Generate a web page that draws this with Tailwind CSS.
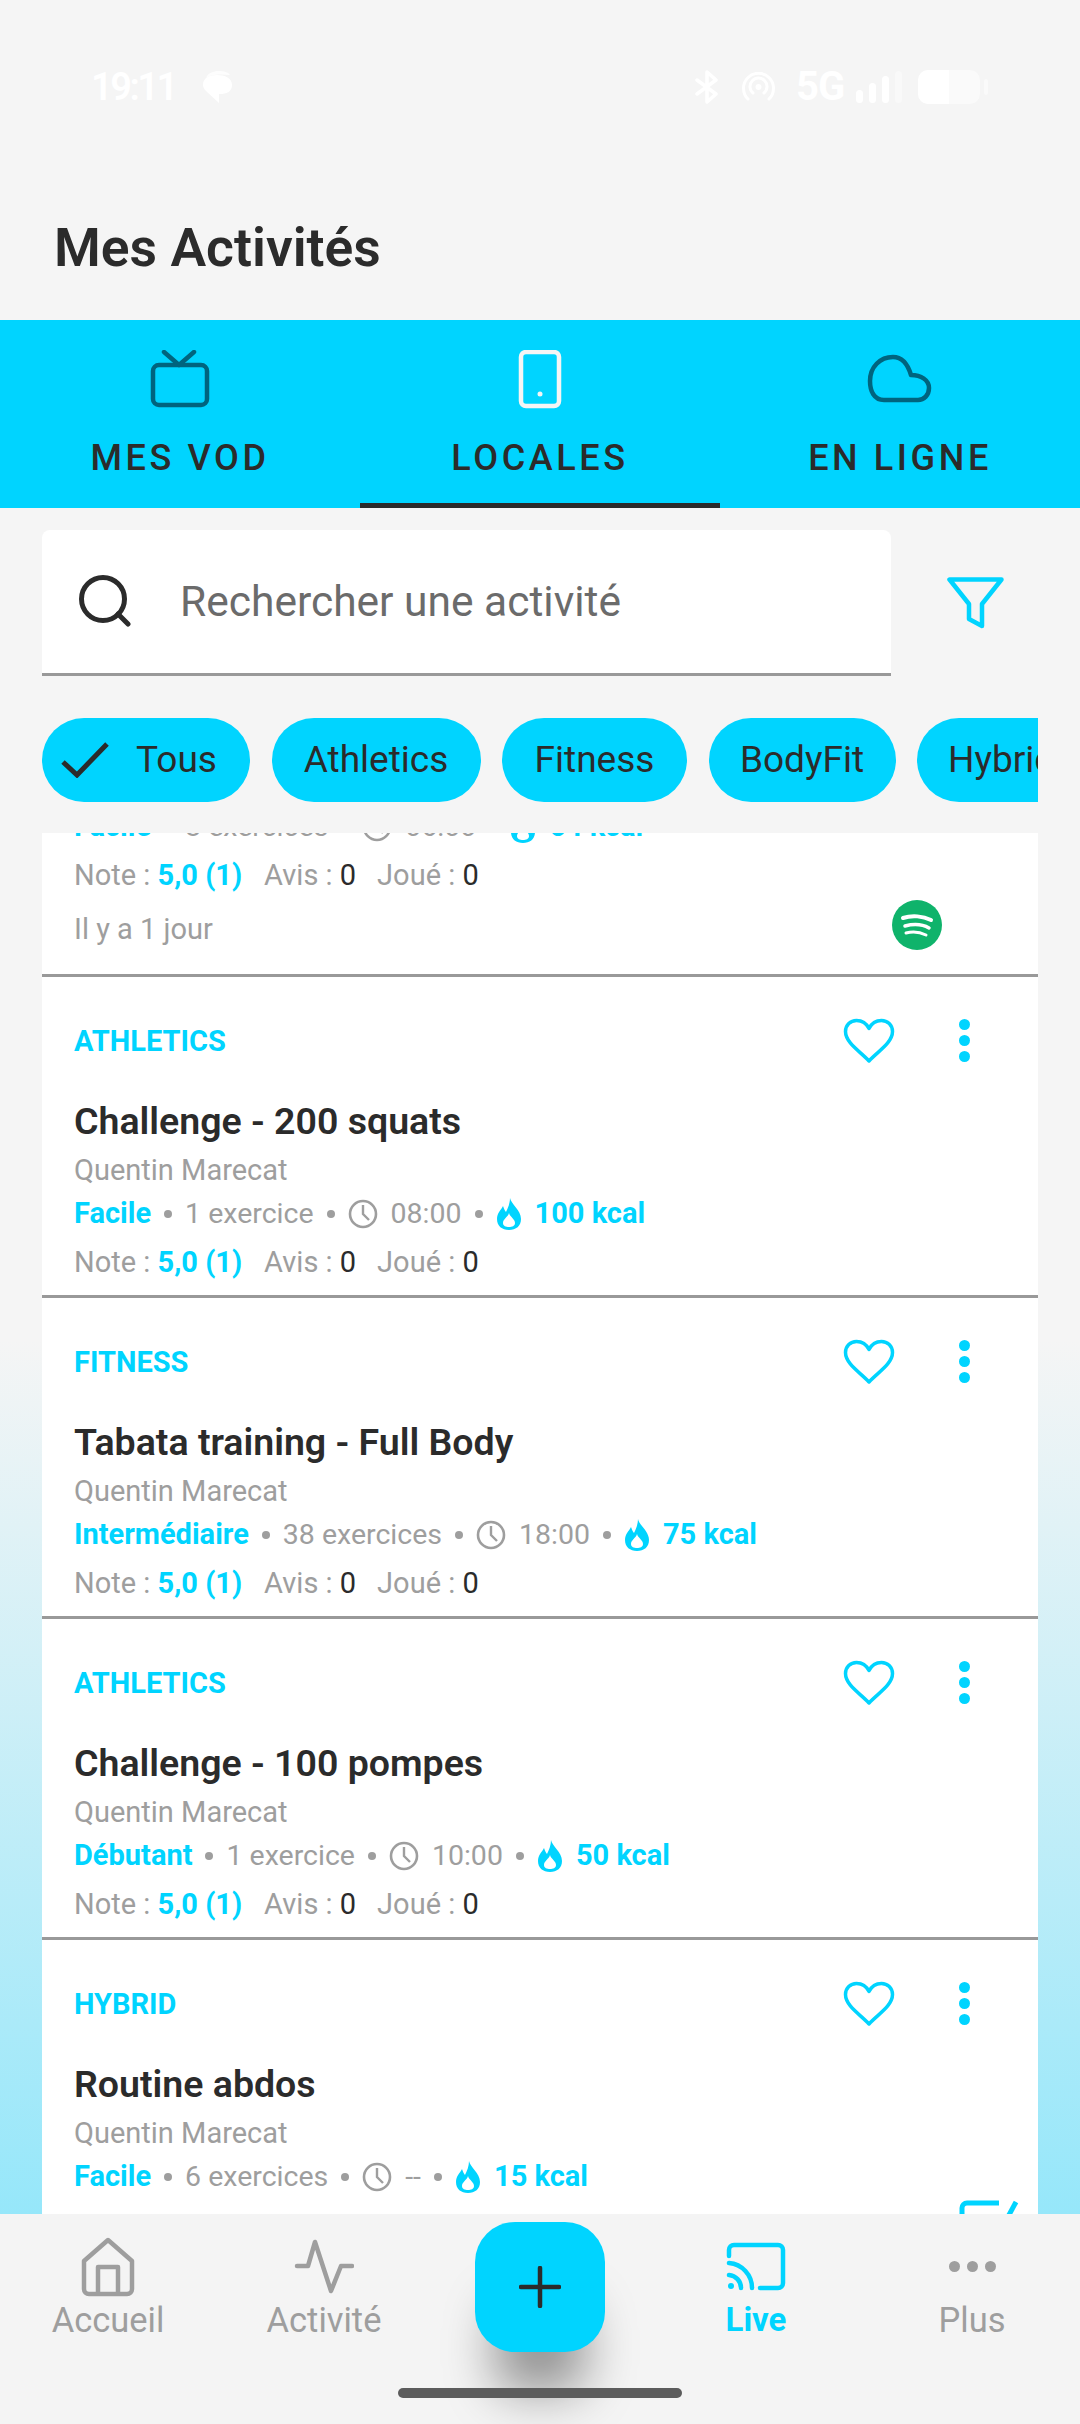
<!DOCTYPE html>
<html lang="en">
<head>
    <meta charset="UTF-8">
    <meta name="viewport" content="width=device-width, initial-scale=1.0">
    <title>Mes Activités</title>
    <script src="https://cdn.jsdelivr.net/npm/@tailwindcss/browser@4"></script>
</head>
<body class="bg-[#f5f5f5]">
    <!-- shared icons -->
    <svg class="hidden">
        <symbol id="heart" viewBox="0 0 52 46">
            <path d="M26 43 C18 34 2.5 25 2.5 13.5 C2.5 7 7.5 2.5 13.5 2.5 C19 2.5 23.5 5.5 26 10.5 C28.5 5.5 33 2.5 38.5 2.5 C44.5 2.5 49.5 7 49.5 13.5 C49.5 25 34 34 26 43 Z" fill="none" stroke="#00d4ff" stroke-width="3.5" stroke-linejoin="round"/>
        </symbol>
        <symbol id="clock" viewBox="0 0 30 30">
            <circle cx="15" cy="15" r="13" fill="none" stroke="#9e9e9e" stroke-width="2.6"/>
            <path d="M15 6v9l6 6" fill="none" stroke="#9e9e9e" stroke-width="2.4"/>
        </symbol>
        <symbol id="flame" viewBox="0 0 26 32">
            <path d="M14 0 C15 6 25 12 25 21 C25 28 20 32 13 32 C6 32 1 28 1 21 C1 15 5 12 7 8 C8 11 9 13 10 14 C12 10 14 5 14 0 Z M13 15 C12 19 7 21 7 25 C7 28 10 29 13 29 C16 29 19 28 19 25 C19 21 14 19 13 15 Z" fill="#00d4ff" fill-rule="evenodd"/>
        </symbol>
    </svg>

    <div class="relative w-[1080px] h-[2424px] flex flex-col overflow-hidden font-['Roboto',sans-serif] bg-[linear-gradient(to_bottom,#f5f5f5_0,#f5f5f5_1340px,#96e7fa_2214px)]">
        <!-- status bar and title -->
        <div class="h-[320px] shrink-0 bg-[#f5f5f5]">
            <div class="h-[200px] flex items-start justify-between pt-[68px] pl-[91px] pr-[92px] text-white">
                <div class="flex items-center gap-[25px] h-[38px]">
                    <span class="text-[38px] leading-[36px] font-semibold tracking-[-2.5px]">19:11</span>
                    <svg width="32" height="34" viewBox="0 0 32 34" fill="#fff"><path d="M5 8C7 3 12 1 18 1c5 0 9 1 11 4-8-1-20-1-24 3z" opacity="0.8"/><path d="M16 5c8 0 15 3 15 10s-6 9-12 9h-1v9L5 21c-2-2-3-4-3-6C2 8 8 5 16 5z"/></svg>
                </div>
                <div class="flex items-center h-[38px]">
                    <svg width="28" height="34" viewBox="0 0 28 34" fill="none" stroke="#fff" stroke-width="3.5" stroke-linecap="round" stroke-linejoin="round"><path d="M4 10l19 14-9 8V2l9 8L4 24"/></svg>
                    <svg class="ml-[21px]" width="33" height="30" viewBox="0 0 33 30" fill="none" stroke="#fff" stroke-width="3" stroke-linecap="round"><path d="M6 27a15 15 0 1 1 21 0"/><path d="M11 21a8.5 8.5 0 1 1 11 0"/><circle cx="16.500" cy="15" r="3" fill="#fff" stroke="none"/></svg>
                    <span class="ml-[21px] w-[46px] text-[40px] leading-[36px] font-bold tracking-[-1px]">5G</span>
                    <div class="ml-[14px] flex items-end gap-[6px] h-[32px]">
                        <div class="w-[7px] h-[13px] rounded-full bg-white"></div>
                        <div class="w-[7px] h-[20px] rounded-full bg-white"></div>
                        <div class="w-[7px] h-[27px] rounded-full bg-white"></div>
                        <div class="w-[7px] h-[32px] rounded-full bg-white/40"></div>
                    </div>
                    <div class="ml-[16px] flex items-center gap-[4px]">
                        <div class="w-[62px] h-[34px] rounded-[10px] bg-white/50 overflow-hidden"><div class="w-[31px] h-full bg-white"></div></div>
                        <div class="w-[4px] h-[16px] rounded-full bg-white/50"></div>
                    </div>
                </div>
            </div>
            <h1 class="mt-[20px] pl-[54px] text-[53.500px] leading-[56px] font-semibold text-[#2b2b2b]">Mes Activités</h1>
        </div>

        <!-- tabs -->
        <div class="h-[188px] shrink-0 grid grid-cols-3 bg-[#00d4ff]">
            <div class="flex flex-col items-center pt-[30px]">
                <svg width="60" height="60" viewBox="0 0 60 60" fill="none" stroke="#00647e" stroke-width="4.500" stroke-linecap="round" stroke-linejoin="round"><rect x="3" y="15" width="54" height="40" rx="6"/><path d="M14 2l15 13L44 2"/></svg>
                <span class="mt-[28px] text-[36px] leading-[40px] tracking-[3.600px] font-medium text-[#2b2b2b]">MES VOD</span>
            </div>
            <div class="relative flex flex-col items-center pt-[30px]">
                <svg width="60" height="60" viewBox="0 0 60 60" fill="none" stroke="#f5f5f5" stroke-width="4.500" stroke-linejoin="round"><rect x="11" y="2" width="38" height="54" rx="5"/><circle cx="30" cy="44" r="2.500" fill="#f5f5f5" stroke="none"/></svg>
                <span class="mt-[28px] text-[36px] leading-[40px] tracking-[3.600px] font-medium text-[#2b2b2b]">LOCALES</span>
                <div class="absolute left-0 right-0 bottom-0 h-[5px] bg-[#2b2b2b]"></div>
            </div>
            <div class="flex flex-col items-center pt-[30px]">
                <svg width="68" height="60" viewBox="0 0 68 60" fill="none" stroke="#00647e" stroke-width="4.500" stroke-linejoin="round"><path d="M18 50 C8 50 4 41 4 31 C4 17 14 7 27 7 C37 7 42 15 45 25 C55 25 63 30 63 38 C63 45 58 50 52 50 Z"/></svg>
                <span class="mt-[28px] text-[36px] leading-[40px] tracking-[3.600px] font-medium text-[#2b2b2b]">EN LIGNE</span>
            </div>
        </div>

        <!-- search -->
        <div class="mt-[22px] ml-[42px] h-[146px] shrink-0 flex items-center">
            <div class="w-[849px] h-full flex items-center bg-white rounded-t-[8px] border-b-[3px] border-[#999999] pl-[37px] pb-[2px]">
                <svg width="52" height="52" viewBox="0 0 52 52" fill="none" stroke="#2b2b2b" stroke-width="5" stroke-linecap="round"><circle cx="24" cy="24" r="21.500"/><path d="M39 39l10 10"/></svg>
                <span class="ml-[49px] pt-[2px] text-[42.500px] text-[#6b6b6b]">Rechercher une activité</span>
            </div>
            <svg class="ml-[56px]" width="57" height="52" viewBox="0 0 57 52" fill="none" stroke="#00d4ff" stroke-width="4.500" stroke-linejoin="round"><path d="M2.500 2.500H54.500L35 27V49L22 42V27Z"/></svg>
        </div>

        <!-- filter chips -->
        <div class="mt-[42px] mx-[42px] h-[84px] shrink-0 flex gap-[21.500px] overflow-hidden text-[37px] text-[#2b2b2b]">
            <div class="h-full w-[208px] shrink-0 flex items-center rounded-full bg-[#00d4ff] pl-[19px]">
                <svg width="48" height="36" viewBox="0 0 48 36" fill="none" stroke="#2b2b2b" stroke-width="5"><path d="M2 20l14 13L46 2"/></svg>
                <span class="ml-[27px]">Tous</span>
            </div>
            <div class="h-full w-[209px] shrink-0 flex items-center justify-center rounded-full bg-[#00d4ff]">Athletics</div>
            <div class="h-full w-[185px] shrink-0 flex items-center justify-center rounded-full bg-[#00d4ff]">Fitness</div>
            <div class="h-full w-[187px] shrink-0 flex items-center justify-center rounded-full bg-[#00d4ff]">BodyFit</div>
            <div class="h-full w-[200px] shrink-0 flex items-center rounded-full bg-[#00d4ff] pl-[31px]">Hybrid</div>
        </div>

        <!-- activity list -->
        <div class="mt-[31px] mx-[42px] flex-1 min-h-0 overflow-hidden">
            <div class="relative bg-white border-b-[3px] border-[#999999] h-[144px]">
                <div class="absolute left-[32px] top-[-29px] h-[46px] flex items-center gap-[13px] text-[28.500px] text-[#9e9e9e]">
                    <span class="text-[29px] font-bold text-[#00d4ff]">Facile</span><i class="w-[8px] h-[8px] rounded-full bg-[#9e9e9e]"></i><span>8 exercices</span><i class="w-[8px] h-[8px] rounded-full bg-[#9e9e9e]"></i><svg width="30" height="30"><use href="#clock"/></svg><span>06:00</span><i class="w-[8px] h-[8px] rounded-full bg-[#9e9e9e]"></i><svg width="26" height="32"><use href="#flame"/></svg><span class="text-[29px] font-bold text-[#00d4ff]">64 kcal</span>
                </div>
                <div class="absolute left-[32px] top-[20px] h-[46px] flex items-center text-[29px] text-[#9e9e9e]">Note :&nbsp;<b class="font-bold text-[#00d4ff]">5,0 (1)</b><span class="ml-[22px]">Avis :&nbsp;</span><span class="text-[#2b2b2b]">0</span><span class="ml-[21px]">Joué :&nbsp;</span><span class="text-[#2b2b2b]">0</span></div>
                <div class="absolute left-[32px] top-[77px] h-[40px] flex items-center text-[29px] text-[#9e9e9e]">Il y a 1 jour</div>
                <svg class="absolute left-[850px] top-[67px]" width="50" height="50" viewBox="0 0 50 50"><circle cx="25" cy="25" r="25" fill="#0fb36b"/><g fill="none" stroke="#fff" stroke-linecap="round"><path d="M11 18c9-3 20-2 28 2" stroke-width="4"/><path d="M13 26c8-2 17-2 24 2" stroke-width="3.500"/><path d="M14 33c7-2 14-1 20 2" stroke-width="3"/></g></svg>
            </div>

            <div class="bg-white pl-[32px] border-b-[3px] border-[#999999]">
                <div class="h-[129px] flex items-center justify-between pr-[68px]">
                    <span class="text-[29px] font-bold text-[#00d4ff]">ATHLETICS</span>
                    <div class="flex items-center gap-[64px] -mt-[2px]"><svg width="52" height="46"><use href="#heart"/></svg><div class="flex flex-col gap-[5px]"><i class="w-[11px] h-[11px] rounded-full bg-[#00d4ff]"></i><i class="w-[11px] h-[11px] rounded-full bg-[#00d4ff]"></i><i class="w-[11px] h-[11px] rounded-full bg-[#00d4ff]"></i></div></div>
                </div>
                <div class="h-[30px] flex items-center text-[37.500px] font-semibold text-[#2b2b2b]">Challenge - 200 squats</div>
                <div class="mt-[15px] h-[40px] flex items-center text-[29px] text-[#9e9e9e]">Quentin Marecat</div>
                <div class="h-[46px] flex items-center gap-[13px] text-[28.500px] text-[#9e9e9e]"><span class="text-[29px] font-bold text-[#00d4ff]">Facile</span><i class="w-[8px] h-[8px] rounded-full bg-[#9e9e9e]"></i><span>1 exercice</span><i class="w-[8px] h-[8px] rounded-full bg-[#9e9e9e]"></i><svg width="30" height="30"><use href="#clock"/></svg><span>08:00</span><i class="w-[8px] h-[8px] rounded-full bg-[#9e9e9e]"></i><svg width="26" height="32"><use href="#flame"/></svg><span class="text-[29px] font-bold text-[#00d4ff]">100 kcal</span></div>
                <div class="mt-[3px] mb-[9px] h-[46px] flex items-center text-[29px] text-[#9e9e9e]">Note :&nbsp;<b class="font-bold text-[#00d4ff]">5,0 (1)</b><span class="ml-[22px]">Avis :&nbsp;</span><span class="text-[#2b2b2b]">0</span><span class="ml-[21px]">Joué :&nbsp;</span><span class="text-[#2b2b2b]">0</span></div>
            </div>

            <div class="bg-white pl-[32px] border-b-[3px] border-[#999999]">
                <div class="h-[129px] flex items-center justify-between pr-[68px]">
                    <span class="text-[29px] font-bold text-[#00d4ff]">FITNESS</span>
                    <div class="flex items-center gap-[64px] -mt-[2px]"><svg width="52" height="46"><use href="#heart"/></svg><div class="flex flex-col gap-[5px]"><i class="w-[11px] h-[11px] rounded-full bg-[#00d4ff]"></i><i class="w-[11px] h-[11px] rounded-full bg-[#00d4ff]"></i><i class="w-[11px] h-[11px] rounded-full bg-[#00d4ff]"></i></div></div>
                </div>
                <div class="h-[30px] flex items-center text-[37.500px] font-semibold text-[#2b2b2b]">Tabata training - Full Body</div>
                <div class="mt-[15px] h-[40px] flex items-center text-[29px] text-[#9e9e9e]">Quentin Marecat</div>
                <div class="h-[46px] flex items-center gap-[13px] text-[28.500px] text-[#9e9e9e]"><span class="text-[29px] font-bold text-[#00d4ff]">Intermédiaire</span><i class="w-[8px] h-[8px] rounded-full bg-[#9e9e9e]"></i><span>38 exercices</span><i class="w-[8px] h-[8px] rounded-full bg-[#9e9e9e]"></i><svg width="30" height="30"><use href="#clock"/></svg><span>18:00</span><i class="w-[8px] h-[8px] rounded-full bg-[#9e9e9e]"></i><svg width="26" height="32"><use href="#flame"/></svg><span class="text-[29px] font-bold text-[#00d4ff]">75 kcal</span></div>
                <div class="mt-[3px] mb-[9px] h-[46px] flex items-center text-[29px] text-[#9e9e9e]">Note :&nbsp;<b class="font-bold text-[#00d4ff]">5,0 (1)</b><span class="ml-[22px]">Avis :&nbsp;</span><span class="text-[#2b2b2b]">0</span><span class="ml-[21px]">Joué :&nbsp;</span><span class="text-[#2b2b2b]">0</span></div>
            </div>

            <div class="bg-white pl-[32px] border-b-[3px] border-[#999999]">
                <div class="h-[129px] flex items-center justify-between pr-[68px]">
                    <span class="text-[29px] font-bold text-[#00d4ff]">ATHLETICS</span>
                    <div class="flex items-center gap-[64px] -mt-[2px]"><svg width="52" height="46"><use href="#heart"/></svg><div class="flex flex-col gap-[5px]"><i class="w-[11px] h-[11px] rounded-full bg-[#00d4ff]"></i><i class="w-[11px] h-[11px] rounded-full bg-[#00d4ff]"></i><i class="w-[11px] h-[11px] rounded-full bg-[#00d4ff]"></i></div></div>
                </div>
                <div class="h-[30px] flex items-center text-[37.500px] font-semibold text-[#2b2b2b]">Challenge - 100 pompes</div>
                <div class="mt-[15px] h-[40px] flex items-center text-[29px] text-[#9e9e9e]">Quentin Marecat</div>
                <div class="h-[46px] flex items-center gap-[13px] text-[28.500px] text-[#9e9e9e]"><span class="text-[29px] font-bold text-[#00d4ff]">Débutant</span><i class="w-[8px] h-[8px] rounded-full bg-[#9e9e9e]"></i><span>1 exercice</span><i class="w-[8px] h-[8px] rounded-full bg-[#9e9e9e]"></i><svg width="30" height="30"><use href="#clock"/></svg><span>10:00</span><i class="w-[8px] h-[8px] rounded-full bg-[#9e9e9e]"></i><svg width="26" height="32"><use href="#flame"/></svg><span class="text-[29px] font-bold text-[#00d4ff]">50 kcal</span></div>
                <div class="mt-[3px] mb-[9px] h-[46px] flex items-center text-[29px] text-[#9e9e9e]">Note :&nbsp;<b class="font-bold text-[#00d4ff]">5,0 (1)</b><span class="ml-[22px]">Avis :&nbsp;</span><span class="text-[#2b2b2b]">0</span><span class="ml-[21px]">Joué :&nbsp;</span><span class="text-[#2b2b2b]">0</span></div>
            </div>

            <div class="relative bg-white pl-[32px] h-[400px]">
                <div class="h-[129px] flex items-center justify-between pr-[68px]">
                    <span class="text-[29px] font-bold text-[#00d4ff]">HYBRID</span>
                    <div class="flex items-center gap-[64px] -mt-[2px]"><svg width="52" height="46"><use href="#heart"/></svg><div class="flex flex-col gap-[5px]"><i class="w-[11px] h-[11px] rounded-full bg-[#00d4ff]"></i><i class="w-[11px] h-[11px] rounded-full bg-[#00d4ff]"></i><i class="w-[11px] h-[11px] rounded-full bg-[#00d4ff]"></i></div></div>
                </div>
                <div class="h-[30px] flex items-center text-[37.500px] font-semibold text-[#2b2b2b]">Routine abdos</div>
                <div class="mt-[15px] h-[40px] flex items-center text-[29px] text-[#9e9e9e]">Quentin Marecat</div>
                <div class="h-[46px] flex items-center gap-[13px] text-[28.500px] text-[#9e9e9e]"><span class="text-[29px] font-bold text-[#00d4ff]">Facile</span><i class="w-[8px] h-[8px] rounded-full bg-[#9e9e9e]"></i><span>6 exercices</span><i class="w-[8px] h-[8px] rounded-full bg-[#9e9e9e]"></i><svg width="30" height="30"><use href="#clock"/></svg><span>--</span><i class="w-[8px] h-[8px] rounded-full bg-[#9e9e9e]"></i><svg width="26" height="32"><use href="#flame"/></svg><span class="text-[29px] font-bold text-[#00d4ff]">15 kcal</span></div>
                <svg class="absolute left-[917px] top-[260px]" width="60" height="60" viewBox="0 0 60 60" fill="none" stroke="#00d4ff" stroke-width="5"><path d="M40 3H8a5 5 0 0 0-5 5v45h45V30"/><path d="M57 2 44 26"/></svg>
            </div>
        </div>

        <!-- bottom navigation -->
        <div class="relative h-[210px] shrink-0 grid grid-cols-5 bg-[#f4f4f4] text-[34.500px] leading-[38px] text-[#9e9e9e]">
            <div class="flex flex-col items-center pt-[22px]">
                <svg width="60" height="62" viewBox="0 0 60 62" fill="none" stroke="#9e9e9e" stroke-width="4.500" stroke-linejoin="round"><path d="M30 4 54 25V53a5 5 0 0 1-5 5H11a5 5 0 0 1-5-5V25Z"/><path d="M20 58V31H40V58"/></svg>
                <span class="mt-[3px]">Accueil</span>
            </div>
            <div class="flex flex-col items-center pt-[22px]">
                <svg width="60" height="62" viewBox="0 0 60 62" fill="none" stroke="#9e9e9e" stroke-width="4.500" stroke-linecap="round" stroke-linejoin="round"><path d="M3 30H14L21 6 37 55 47 30H58"/></svg>
                <span class="mt-[3px]">Activité</span>
            </div>
            <div class="flex justify-center pt-[8px]">
                <div class="w-[130px] h-[130px] rounded-[40px] bg-[#00d4ff] flex items-center justify-center shadow-[0_60px_50px_-20px_rgba(0,0,0,0.4)]">
                    <svg width="42" height="42" viewBox="0 0 42 42" stroke="#2b2b2b" stroke-width="4.500" stroke-linecap="round"><path d="M21 2v38M2 21h38"/></svg>
                </div>
            </div>
            <div class="flex flex-col items-center pt-[22px]">
                <svg width="60" height="62" viewBox="0 0 60 62" fill="none" stroke="#00d4ff" stroke-width="4.500" stroke-linecap="round" stroke-linejoin="round"><path d="M3 20V14a5 5 0 0 1 5-5h44a5 5 0 0 1 5 5v33a5 5 0 0 1-5 5H34"/><path d="M3 27a25 25 0 0 1 23 25"/><path d="M3 39a13 13 0 0 1 12 13"/><circle cx="5" cy="50" r="3" fill="#00d4ff" stroke="none"/></svg>
                <span class="mt-[3px] text-[33px] font-bold text-[#00d4ff]">Live</span>
            </div>
            <div class="flex flex-col items-center pt-[22px]">
                <div class="h-[62px] flex items-center gap-[7px] pb-[2px]"><i class="w-[11px] h-[11px] rounded-full bg-[#9e9e9e]"></i><i class="w-[11px] h-[11px] rounded-full bg-[#9e9e9e]"></i><i class="w-[11px] h-[11px] rounded-full bg-[#9e9e9e]"></i></div>
                <span class="mt-[3px]">Plus</span>
            </div>
            <div class="absolute left-[398px] top-[174px] w-[284px] h-[10px] rounded-full bg-[#5c5c5c]"></div>
        </div>
    </div>
</body>
</html>
